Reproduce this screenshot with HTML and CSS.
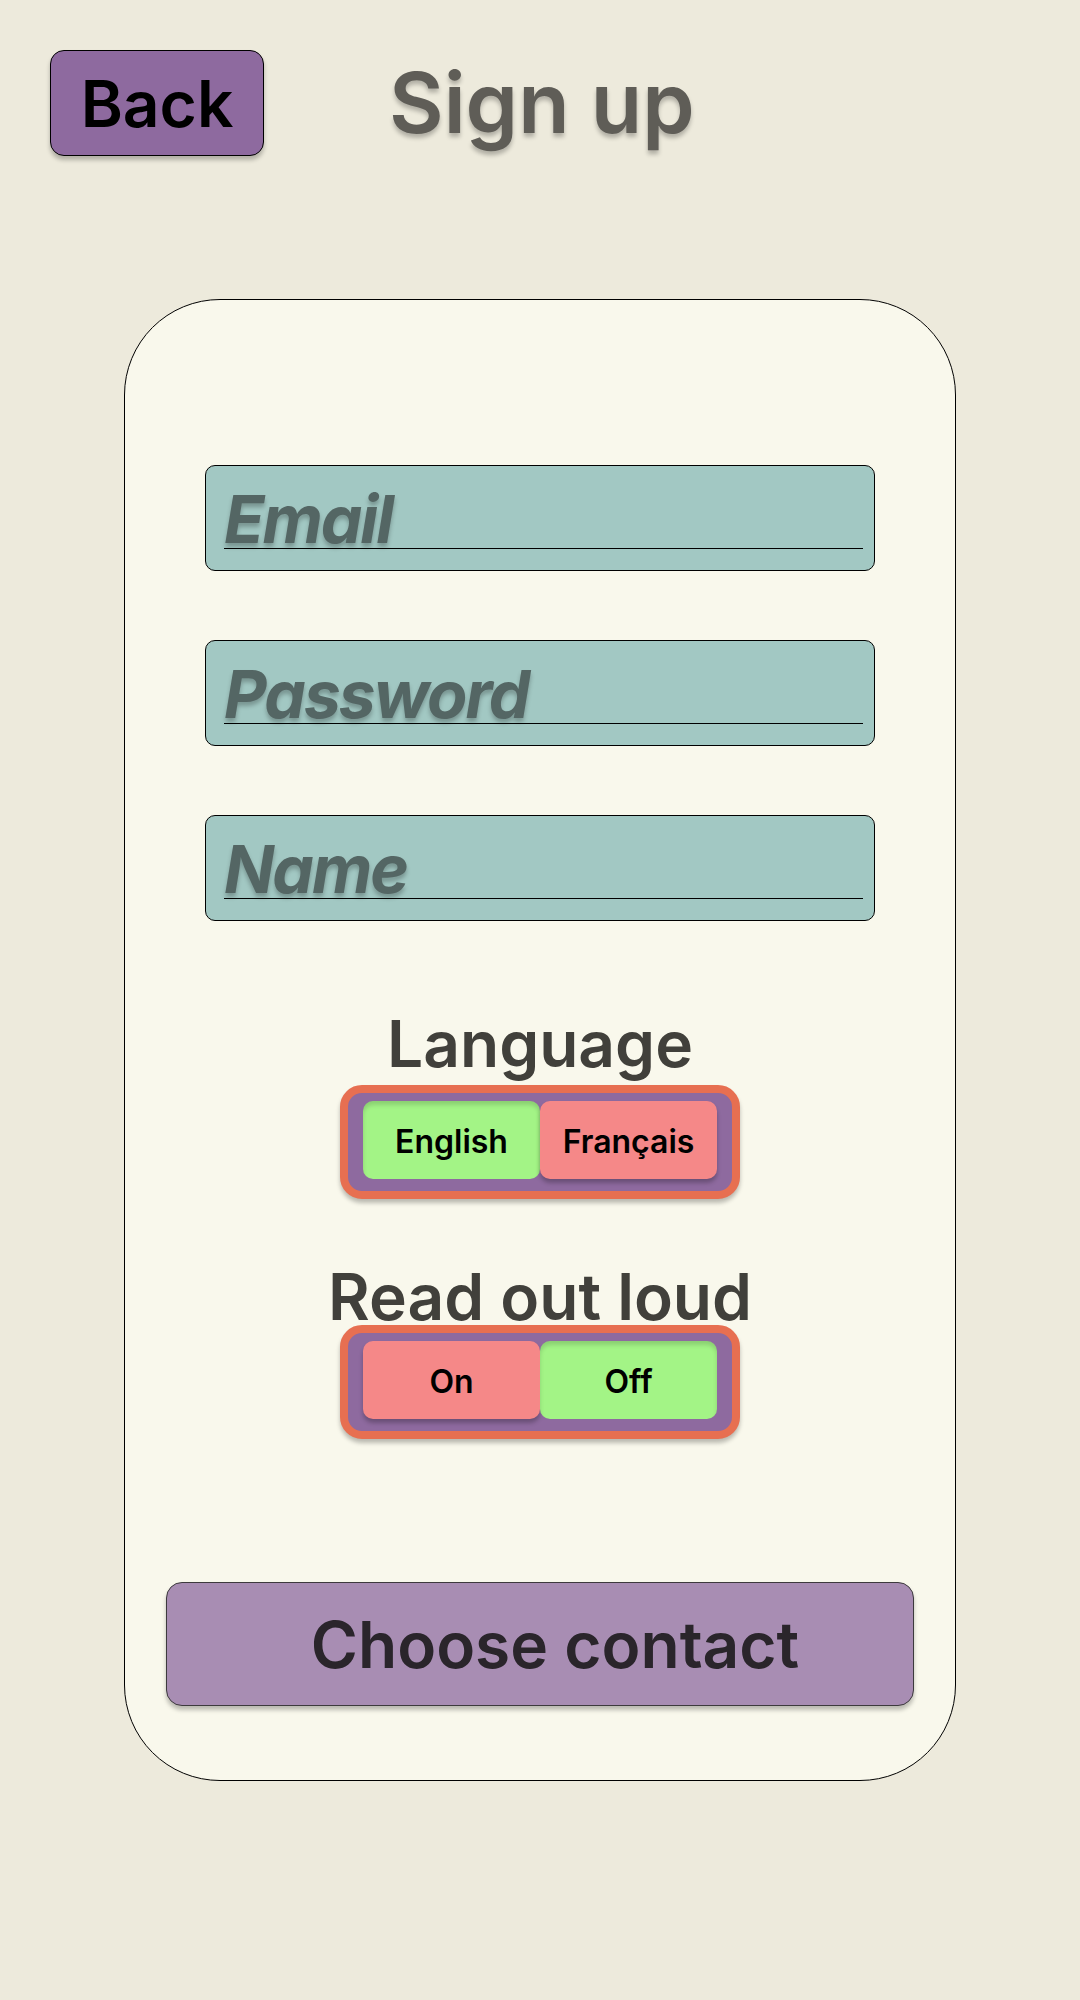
FILE: index.html
```html
<!DOCTYPE html>
<html lang="en">
<head>
<meta charset="utf-8">
<title>Sign up</title>
<link rel="stylesheet" href="styles.css">
</head>
<body>
<header class="header">
  <div class="back">Back</div>
  <h1 class="title">Sign up</h1>
</header>
<main class="card">
  <div class="field"><div class="field-label">Email</div></div>
  <div class="field"><div class="field-label">Password</div></div>
  <div class="field"><div class="field-label">Name</div></div>

  <div class="section-label lang-label">Language</div>
  <div class="toggle">
    <div class="opt opt-on">English</div>
    <div class="opt opt-off">Français</div>
  </div>

  <div class="section-label read-label">Read out loud</div>
  <div class="toggle">
    <div class="opt opt-off">On</div>
    <div class="opt opt-on">Off</div>
  </div>

  <div class="choose">Choose contact</div>
</main>
</body>
</html>
```
FILE: styles.css
```css
html, body {
  margin: 0;
  padding: 0;
}
body {
  background: #edeadc;
  font-family: Inter, "Noto Sans", sans-serif;
  width: 1080px;
  height: 2000px;
}
.header {
  display: flex;
  align-items: center;
  padding: 50px 0 0 50px;
  gap: 125px;
}
.back {
  box-sizing: border-box;
  width: 214px;
  height: 106px;
  border: 1px solid #000;
  border-radius: 14px;
  background: #8e6a9f;
  box-shadow: 0 4px 4px rgba(0,0,0,0.25);
  display: flex;
  align-items: center;
  justify-content: center;
  font-size: 64px;
  font-weight: 600;
  color: #000;
}
.title {
  margin: 0;
  font-size: 84px;
  font-weight: 600;
  color: #5f5d57;
  text-shadow: 0 4px 4px rgba(0,0,0,0.25);
  line-height: 1;
}
.card {
  box-sizing: border-box;
  margin: 143px 0 0 124px;
  width: 832px;
  height: 1482px;
  border: 1px solid #000;
  border-radius: 96px;
  background: #f9f8ec;
  display: flex;
  flex-direction: column;
  align-items: center;
  padding-top: 165px;
}
.field {
  box-sizing: border-box;
  width: 670px;
  height: 106px;
  border: 1px solid #000;
  border-radius: 10px;
  background: #a2c8c3;
  display: flex;
  flex-direction: column;
  justify-content: flex-end;
  margin-bottom: 69px;
}
.field:nth-of-type(3) {
  margin-bottom: 0;
}
.field-label {
  margin: 0 11px 21px 18px;
  border-bottom: 1px solid #000;
  font-size: 66px;
  line-height: 57px;
  font-weight: 700;
  font-style: italic;
  letter-spacing: -0.03em;
  color: #546664;
  text-shadow: 0 4px 4px rgba(0,0,0,0.25);
}
.section-label {
  font-size: 64px;
  line-height: 64px;
  font-weight: 600;
  color: #41403b;
}
.lang-label {
  margin-top: 91px;
  margin-bottom: 9px;
}
.read-label {
  margin-top: 66px;
  margin-bottom: -4px;
}
.toggle {
  box-sizing: border-box;
  width: 400px;
  border: 8px solid #e76f51;
  border-radius: 22px;
  background: #8e6a9f;
  padding: 8px 15px 12px 15px;
  display: flex;
  box-shadow: 0 4px 4px rgba(0,0,0,0.25);
}
.opt {
  flex: 1;
  height: 78px;
  box-sizing: border-box;
  padding-top: 3px;
  border-radius: 10px;
  display: flex;
  align-items: center;
  justify-content: center;
  font-size: 32px;
  font-weight: 600;
  color: #000;
}
.opt-on {
  background: #a3f486;
  box-shadow: inset 0 4px 4px rgba(0,0,0,0.15);
}
.opt-off {
  background: #f58888;
  box-shadow: 0 4px 4px rgba(0,0,0,0.25);
}
.choose {
  box-sizing: border-box;
  margin-top: 143px;
  width: 748px;
  height: 124px;
  border: 1px solid #3d3a3d;
  border-radius: 16px;
  background: #a88db3;
  box-shadow: 0 4px 4px rgba(0,0,0,0.25);
  display: flex;
  align-items: center;
  justify-content: center;
  padding-left: 30px;
  font-size: 64px;
  font-weight: 600;
  color: #2a252b;
}
```
